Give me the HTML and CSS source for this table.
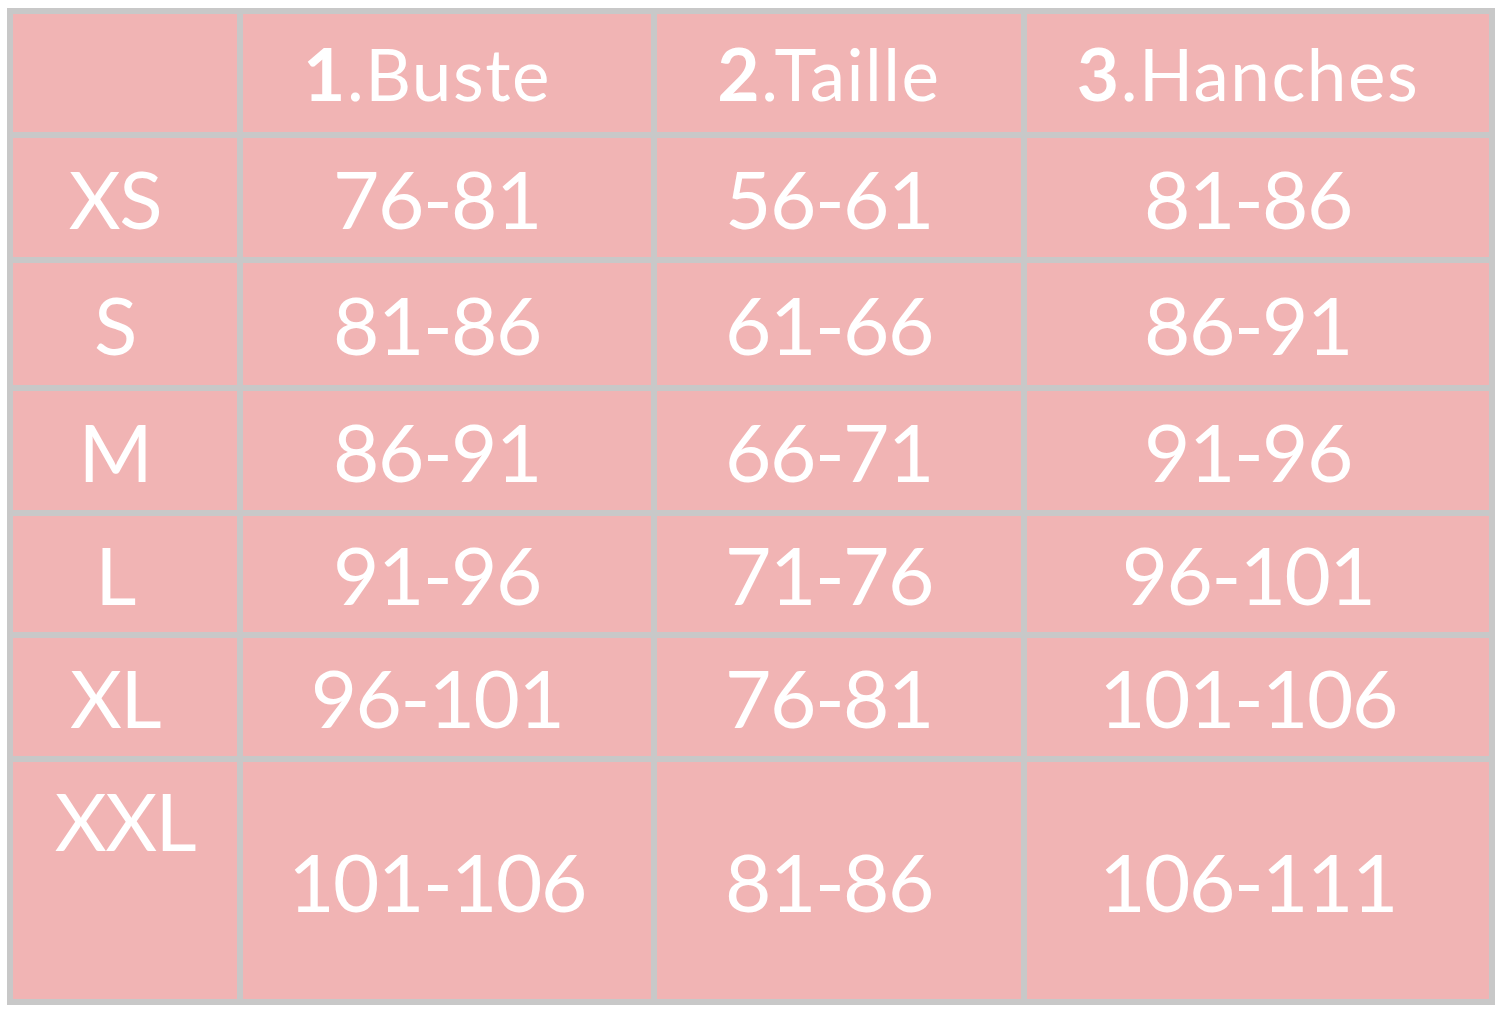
FILE: index.html
```html
<!DOCTYPE html>
<html lang="fr">
<head>
<meta charset="utf-8">
<title>Guide des tailles</title>
<link rel="stylesheet" href="styles.css">
</head>
<body>
<div class="chart">
  <div class="cell"></div>
  <div class="cell head buste"><b>1</b>.Buste</div>
  <div class="cell head"><b>2</b>.Taille</div>
  <div class="cell head"><b>3</b>.Hanches</div>

  <div class="cell">XS</div>
  <div class="cell">76-81</div>
  <div class="cell">56-61</div>
  <div class="cell">81-86</div>

  <div class="cell">S</div>
  <div class="cell">81-86</div>
  <div class="cell">61-66</div>
  <div class="cell">86-91</div>

  <div class="cell">M</div>
  <div class="cell">86-91</div>
  <div class="cell">66-71</div>
  <div class="cell">91-96</div>

  <div class="cell">L</div>
  <div class="cell">91-96</div>
  <div class="cell">71-76</div>
  <div class="cell">96-101</div>

  <div class="cell">XL</div>
  <div class="cell">96-101</div>
  <div class="cell">76-81</div>
  <div class="cell">101-106</div>

  <div class="cell top">XXL</div>
  <div class="cell">101-106</div>
  <div class="cell">81-86</div>
  <div class="cell">106-111</div>
</div>
</body>
</html>
```

FILE: styles.css
```css
html, body {
  margin: 0;
  padding: 0;
  background: #ffffff;
}

.chart {
  display: grid;
  grid-template-columns: 224px 408px 364px 462px;
  grid-template-rows: 118px 119px 122px 119px 116px 118px 237px;
  gap: 6px;
  padding: 6px;
  margin: 8px 0 0 7px;
  width: max-content;
  background: #c8c8c8;
  font-family: "Lato", "Liberation Sans", sans-serif;
  color: #ffffff;
}

.cell {
  background: #f1b4b4;
  display: flex;
  align-items: center;
  justify-content: center;
  font-size: 80px;
  line-height: 1.2;
  letter-spacing: -1.5px;
  padding-right: 20px;
  white-space: nowrap;
}

.cell.head {
  font-size: 71px;
  letter-spacing: 1.5px;
  padding-top: 2px;
}

.cell.head b {
  font-weight: 700;
  font-size: 73px;
}

.cell.buste {
  padding-right: 40px;
}

.cell.top {
  align-items: flex-start;
  padding-top: 10px;
  padding-right: 0;
}
```
